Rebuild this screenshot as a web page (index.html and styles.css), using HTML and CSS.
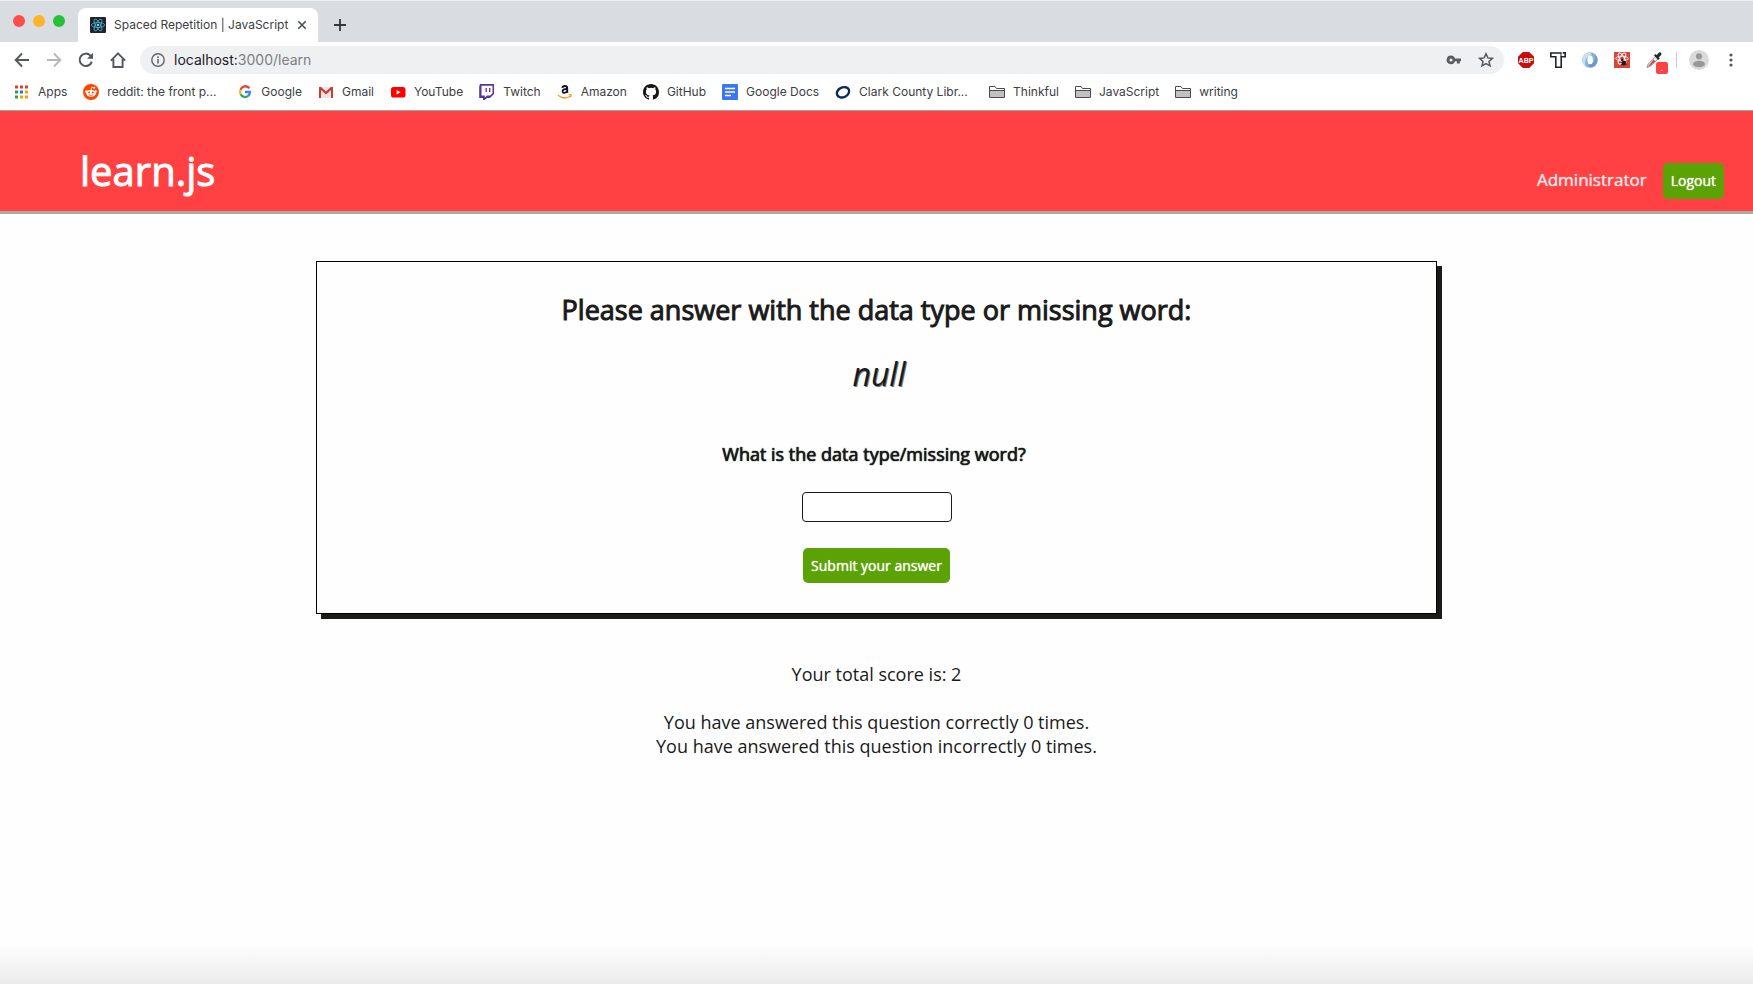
FILE: index.html
```html
<!DOCTYPE html>
<html lang="en">
<head>
<meta charset="utf-8">
<title>Spaced Repetition | JavaScript</title>
<link rel="stylesheet" href="styles.css">
</head>
<body>
<div class="browser">
  <div class="tab-strip">
    <div class="lights"><span class="light red"></span><span class="light amber"></span><span class="light green"></span></div>
    <div class="tab">
      <svg class="icon" viewBox="0 0 16 16"><rect width="16" height="16" rx="1" fill="#20232a"/><g fill="none" stroke="#4fb3d0" stroke-width=".8"><ellipse cx="8" cy="8" rx="6.6" ry="2.5"/><ellipse cx="8" cy="8" rx="6.6" ry="2.5" transform="rotate(60 8 8)"/><ellipse cx="8" cy="8" rx="6.6" ry="2.5" transform="rotate(120 8 8)"/></g><circle cx="8" cy="8" r="1.3" fill="#61dafb"/></svg>
      <span class="tab-title">Spaced Repetition | JavaScript</span>
      <button class="icon-btn" aria-label="Close tab"><svg width="10" height="10" viewBox="0 0 10 10"><path d="M1.3 1.3l7.4 7.4M8.7 1.3L1.3 8.7" stroke="#4b4f54" stroke-width="1.6"/></svg></button>
    </div>
    <button class="icon-btn new-tab" aria-label="New tab"><svg width="12" height="12" viewBox="0 0 12 12"><path d="M6 0v12M0 6h12" stroke="#33363a" stroke-width="1.8"/></svg></button>
  </div>

  <div class="toolbar">
    <div class="nav">
      <button class="icon-btn" aria-label="Back"><svg class="icon" viewBox="0 0 16 16"><path d="M15 8H2M8 1.5L1.7 8 8 14.5" fill="none" stroke="#54575b" stroke-width="1.9"/></svg></button>
      <button class="icon-btn" aria-label="Forward"><svg class="icon" viewBox="0 0 16 16"><path d="M1 8h13M8 1.5L14.3 8 8 14.5" fill="none" stroke="#b5b7b9" stroke-width="1.9"/></svg></button>
      <button class="icon-btn" aria-label="Reload"><svg class="icon" viewBox="0 0 16 16"><path d="M13.8 9.6A6.2 6.2 0 1 1 12.4 3.6L14 5.2" fill="none" stroke="#54575b" stroke-width="2"/><path d="M15 .8v6H9z" fill="#54575b"/></svg></button>
      <button class="icon-btn" aria-label="Home"><svg class="icon" viewBox="0 0 16 16"><path d="M.9 8.6L8 1.4l7.1 7.2M3.4 7v8h9.2V7" fill="none" stroke="#54575b" stroke-width="1.9"/></svg></button>
    </div>
    <div class="omnibox">
      <svg class="icon-sm" viewBox="0 0 14 14"><circle cx="7" cy="7" r="6.2" fill="none" stroke="#5f6368" stroke-width="1.4"/><path d="M7 6v4.4M7 3.3v1.6" stroke="#5f6368" stroke-width="1.5"/></svg>
      <span class="url">localhost:<span class="muted">3000/learn</span></span>
      <button class="icon-btn" aria-label="Saved passwords"><svg class="icon" viewBox="0 0 16 16"><path fill="#5a5d61" fill-rule="evenodd" d="M5 3.6a4.3 4.3 0 0 1 4 2.9h6v2.7h-1.2v2.3h-2.9V9.2H9A4.3 4.3 0 1 1 5 3.6zm0 2.8a1.5 1.5 0 1 0 0 3 1.5 1.5 0 0 0 0-3z"/></svg></button>
      <button class="icon-btn" aria-label="Bookmark"><svg class="icon" viewBox="0 0 16 16"><path d="M8 1.8l1.9 4.1 4.5.5-3.4 3 1 4.4L8 11.5l-4 2.3 1-4.4-3.4-3 4.5-.5z" fill="none" stroke="#54575b" stroke-width="1.5"/></svg></button>
    </div>
    <div class="extensions">
      <svg class="icon" viewBox="0 0 16 16" role="img"><path d="M4.8 0h6.4L16 4.8v6.4L11.2 16H4.8L0 11.2V4.8z" fill="#c70d0d"/><text x="8" y="10.5" text-anchor="middle" class="abp">ABP</text></svg>
      <svg class="icon" viewBox="0 0 16 16"><path d="M.8 1h10.400M.8 .3v4.400h5v10.500h5.400V4.700h4V.9h-2.500M4 4.700h2" fill="none" stroke="#1e2530" stroke-width="1.600"/><path d="M11 .3v4.400" stroke="#1e2530"/></svg>
      <svg class="icon" viewBox="0 0 16 16"><circle cx="8" cy="8" r="7.8" fill="#8bb2dc"/><path d="M8 .4A7.6 7.6 0 0 0 4 14.6C1.800 9.500 4 4 10 3.300z" fill="#c9def2"/><path d="M8 15.600a7.600 7.600 0 0 0 5-13C14.500 8 12 12 6 12.800z" fill="#6b97c9"/><ellipse cx="8.200" cy="8" rx="2.800" ry="4.200" fill="#fff"/></svg>
      <svg class="icon" viewBox="0 0 16 16"><rect width="16" height="16" fill="#d9453a"/><g fill="none" stroke="#fff" stroke-width="1"><ellipse cx="8" cy="6.500" rx="6.200" ry="2.300"/><ellipse cx="8" cy="6.500" rx="6.200" ry="2.300" transform="rotate(60 8 6.500)"/><ellipse cx="8" cy="6.500" rx="6.200" ry="2.300" transform="rotate(120 8 6.500)"/></g><ellipse cx="9.800" cy="11" rx="2.200" ry="2.600" fill="#191919"/><circle cx="8.200" cy="8" r="1.200" fill="#191919"/><path d="M6.500 10l6.500 2.500M12.500 9l-5.500 4" stroke="#191919" stroke-width=".8"/></svg>
      <span class="picker">
        <svg class="icon" viewBox="0 0 16 16"><path d="M9.500 4.500l2.500 2.500-7.500 7L1 15.500 2.300 12z" fill="#eee" stroke="#777" stroke-width=".8"/><path d="M7.500 7.500l1.800 1.800L4 14H2.500z" fill="#d8453e"/><path d="M8 3.500L9.500 2l1.300 1L13 .6c1.500-.9 3.200 1 2.200 2.400l-2.400 2.200 1 1.300L12.300 8z" fill="#292929"/></svg>
        <span class="badge">.</span>
      </span>
    </div>
    <span class="divider"></span>
    <button class="icon-btn" aria-label="Profile"><svg width="20" height="20" viewBox="0 0 20 20"><circle cx="10" cy="10" r="10" fill="#dadada"/><circle cx="10" cy="6.300" r="3.100" fill="#989898"/><ellipse cx="10" cy="14" rx="6" ry="3.200" fill="#989898"/></svg></button>
    <button class="icon-btn menu" aria-label="Menu"><svg width="4" height="14" viewBox="0 0 4 14"><g fill="#54575b"><circle cx="2" cy="2" r="1.600"/><circle cx="2" cy="7" r="1.600"/><circle cx="2" cy="12" r="1.600"/></g></svg></button>
  </div>

  <nav class="bookmarks" aria-label="Bookmarks">
    <a href="#"><svg class="icon" viewBox="0 0 16 16"><path d="M1 1.500h3v3H1zM6 1.500h3v3H6zM11 1.500h3v3h-3z" fill="#e8372c"/><path d="M1 6.500h3v3H1z" fill="#2f9e4f"/><path d="M6 6.500h3v3H6z" fill="#1a73e8"/><path d="M11 6.500h3v3h-3zM11 11.500h3v3h-3z" fill="#f5a300"/><path d="M1 11.500h3v3H1z" fill="#2f9e4f"/><path d="M6 11.500h3v3H6z" fill="#f5a300"/></svg><span>Apps</span></a>
    <a href="#"><svg class="icon" viewBox="0 0 16 16"><circle cx="8" cy="8" r="8" fill="#ff4500"/><ellipse cx="8" cy="9.300" rx="4.700" ry="3.400" fill="#fff"/><circle cx="3.400" cy="7.600" r="1.300" fill="#fff"/><circle cx="12.600" cy="7.600" r="1.300" fill="#fff"/><path d="M8 6.200l.7-3 2.300.6" fill="none" stroke="#fff" stroke-width=".8"/><circle cx="11.300" cy="3.800" r="1" fill="#fff"/><circle cx="6.200" cy="8.500" r="1" fill="#ff4500"/><circle cx="9.800" cy="8.500" r="1" fill="#ff4500"/><path d="M6 10.800q2 1.300 4 0" fill="none" stroke="#ff4500" stroke-width=".8"/></svg><span class="clipped">reddit: the front p...</span></a>
    <a href="#"><svg class="icon" viewBox="0 0 16 16"><g fill="none" stroke-width="2.300"><path d="M12.400 4.300A5 5 0 0 0 3.600 5.800" stroke="#ea4335"/><path d="M3.600 5.700a5 5 0 0 0 0 4.600" stroke="#fbbc05"/><path d="M3.600 10.200a5 5 0 0 0 7.600 1.600" stroke="#34a853"/><path d="M11 12a5 5 0 0 0 2-4H8" stroke="#4285f4"/></g></svg><span>Google</span></a>
    <a href="#"><svg class="icon" viewBox="0 0 16 16"><path d="M1 3h14v11H1z" fill="#e6e6e6"/><path d="M1 3h2l5 4.500L13 3h2v11h-2V6L8 10.500 3 6v8H1z" fill="#d3392f"/></svg><span>Gmail</span></a>
    <a href="#"><svg class="icon" viewBox="0 0 16 16"><rect x="1" y="3" width="14.500" height="10.500" rx="2.600" fill="#f00"/><path d="M6.600 6v4.600l4-2.300z" fill="#fff"/></svg><span>YouTube</span></a>
    <a href="#"><svg class="icon" viewBox="0 0 16 16"><path d="M1 0H15v10l-4 4H8l-2.200 2H4v-2H.2V2.600z" fill="#593695"/><path d="M2.500 1.700h11v7.500L11.200 11.500H8l-2.200 2v-2H2.500z" fill="#fff"/><path d="M7.200 4v4M10.700 4v4" stroke="#593695" stroke-width="1.300"/></svg><span>Twitch</span></a>
    <a href="#"><svg class="icon" viewBox="0 0 16 16"><path d="M5.400 3.800C5.600 2.400 6.700 2 7.900 2c1.500 0 2.300.8 2.300 2.100v3.500c0 .5.300.8.600 1.200" fill="none" stroke="#111" stroke-width="1.900"/><path d="M9.900 5C7.100 5 5.500 5.700 5.600 7.400c.2 2.100 3.300 1.800 4.300-.4" fill="none" stroke="#111" stroke-width="1.800"/><path d="M1 11.200c4 3.300 9 3.200 12.600.8M11.500 10.800c1.300-.3 2.500-.4 2.800 0 .3.500-.2 1.600-.7 2.400" fill="none" stroke="#f79a1c" stroke-width="1.300"/></svg><span>Amazon</span></a>
    <a href="#"><svg class="icon" viewBox="0 0 16 16"><path fill="#161614" d="M8 0C3.580 0 0 3.580 0 8c0 3.540 2.290 6.530 5.470 7.590.4.070.55-.17.55-.38 0-.19-.010-.82-.010-1.490-2.010.37-2.530-.49-2.690-.94-.090-.23-.48-.94-.82-1.130-.28-.15-.68-.52-.010-.53.63-.010 1.080.58 1.230.82.72 1.210 1.870.87 2.330.66.070-.52.28-.87.510-1.070-1.780-.2-3.640-.89-3.640-3.950 0-.87.310-1.590.82-2.150-.080-.2-.36-1.020.080-2.120 0 0 .67-.21 2.200.82a7.600 7.600 0 0 1 4 0c1.530-1.040 2.200-.82 2.200-.82.44 1.100.16 1.920.080 2.120.51.56.82 1.270.82 2.150 0 3.070-1.870 3.750-3.650 3.950.29.25.54.73.54 1.480 0 1.070-.010 1.930-.010 2.200 0 .21.150.46.55.38A8 8 0 0 0 16 8c0-4.420-3.580-8-8-8z"/></svg><span>GitHub</span></a>
    <a href="#"><svg class="icon" viewBox="0 0 16 16"><rect width="16" height="16" rx="1" fill="#3b78f0"/><path d="M3 4.500h10M3 8h10M3 11.500h6" stroke="#fff" stroke-width="1.700"/></svg><span>Google Docs</span></a>
    <a href="#"><svg class="icon" viewBox="0 0 16 16"><ellipse cx="8" cy="8.300" rx="6.400" ry="4.900" transform="rotate(-25 8 8.300)" fill="none" stroke="#0b2a5b" stroke-width="2.400"/></svg><span class="clipped">Clark County Libr...</span></a>
    <a href="#"><svg class="icon" viewBox="0 0 16 16"><path d="M.5 13.500v-11H6l1.500 2h8v9z" fill="#fff" stroke="#4b4b4b"/><path d="M1 6.500h14V13H1z" fill="#c1c1c4"/><path d="M.5 6.500h15" stroke="#4b4b4b"/></svg><span>Thinkful</span></a>
    <a href="#"><svg class="icon" viewBox="0 0 16 16"><path d="M.5 13.500v-11H6l1.500 2h8v9z" fill="#fff" stroke="#4b4b4b"/><path d="M1 6.500h14V13H1z" fill="#c1c1c4"/><path d="M.5 6.500h15" stroke="#4b4b4b"/></svg><span>JavaScript</span></a>
    <a href="#"><svg class="icon" viewBox="0 0 16 16"><path d="M.5 13.500v-11H6l1.500 2h8v9z" fill="#fff" stroke="#4b4b4b"/><path d="M1 6.500h14V13H1z" fill="#c1c1c4"/><path d="M.5 6.500h15" stroke="#4b4b4b"/></svg><span>writing</span></a>
  </nav>
</div>

<header class="site-header">
  <h1><a href="#">learn.js</a></h1>
  <div class="account"><span class="user">Administrator</span><button class="btn">Logout</button></div>
</header>

<main>
  <section class="card">
    <h2>Please answer with the data type or missing word:</h2>
    <p class="word">null</p>
    <form class="answer">
      <label for="guess">What is the data type/missing word?</label>
      <input id="guess" type="text">
      <button class="btn" type="button">Submit your answer</button>
    </form>
  </section>
  <div class="stats">
    <p>Your total score is: 2</p>
    <p>You have answered this question correctly 0 times.<br>You have answered this question incorrectly 0 times.</p>
  </div>
</main>
</body>
</html>
```
FILE: styles.css
```css
* { box-sizing: border-box; }

body {
  margin: 0;
  min-height: 100vh;
  color: #1a1a1a;
  font: 18px/24px "Open Sans", sans-serif;
  background: #fefefe linear-gradient(to top, #ebebeb, #fefefe) bottom / 100% 40px no-repeat;
}

button { font: inherit; cursor: pointer; }
a { color: inherit; text-decoration: none; }
svg { display: block; flex: none; overflow: visible; }

.icon { width: 16px; height: 16px; }
.icon-sm { width: 14px; height: 14px; }
.icon-btn { display: flex; padding: 0; border: 0; background: none; }

/* Browser chrome */
.browser {
  background: #fff;
  border-bottom: 1px solid #a3a3a3;
  color: #3c4043;
  font: 12px/16px Inter, sans-serif;
}

.tab-strip {
  display: flex;
  height: 42px;
  padding-left: 13px;
  background: #d9dce1;
  border-top: 1px solid #eceef0;
}
.lights { display: flex; gap: 8px; padding-top: 14px; margin-right: 13px; }
.light { width: 12px; height: 12px; border-radius: 50%; }
.red { background: #fc4f4b; }
.amber { background: #fdb32a; }
.green { background: #26c138; }

.tab {
  display: flex;
  align-items: center;
  width: 240px;
  margin-top: 7px;
  padding: 0 11px 0 12px;
  border-radius: 8px 8px 0 0;
  background: #fff;
}
.tab-title { flex: 1; margin-left: 8px; white-space: nowrap; }
.new-tab { align-self: center; margin: 7px 0 0 16px; }

.toolbar { display: flex; align-items: center; height: 36px; padding: 0 20px 0 14px; }
.nav { display: flex; gap: 16px; margin-right: 14px; }
.omnibox {
  display: flex;
  flex: 1;
  align-items: center;
  gap: 16px;
  height: 28px;
  padding: 0 10px 0 11px;
  border-radius: 14px;
  background: #eff0f2;
}
.url { flex: 1; margin-left: -7px; color: #202124; font-size: 14px; }
.muted { color: #7b7f84; }
.extensions { display: flex; gap: 16px; margin-left: 14px; }
.abp { fill: #fff; font: bold 7px "Liberation Sans", sans-serif; }
.picker { position: relative; }
.badge {
  position: absolute;
  left: 10px;
  top: 10px;
  width: 12px;
  height: 12px;
  border-radius: 2px;
  background: #ff4143;
  color: #fff;
  font-size: 10px;
  line-height: 10px;
  text-align: center;
}
.divider { width: 1px; height: 16px; margin: 0 12px 0 14px; background: #ccc; }
.menu { margin-left: 20px; }

.bookmarks { display: flex; gap: 16px; height: 32px; padding: 0 14px 4px; align-items: center; }
.bookmarks a { display: flex; align-items: center; gap: 8px; white-space: nowrap; }
.clipped { min-width: 114px; }

/* Page */
.site-header {
  display: flex;
  justify-content: space-between;
  align-items: flex-end;
  height: 103px;
  padding: 0 29px 12px 80px;
  border-bottom: 3px solid #a9a9a9;
  background: #ff4143;
  color: #fff;
}
h1 { margin: 0; font-size: 40px; line-height: 56px; font-weight: 400; -webkit-text-stroke: 1px; }
.account { display: flex; align-items: center; gap: 16px; }
.user {
  padding-bottom: 2px;
  color: #f0e6e6;
  font-size: 17px;
  text-shadow: 0 0 1px currentColor;
}

.btn {
  height: 35px;
  padding: 0 8px;
  border: 0;
  border-radius: 5px;
  background: #5ba304;
  color: #fff;
  font-size: 14px;
  text-shadow: 0 0 1px currentColor;
}
.account .btn { height: 36px; }

main { padding: 47px 0; text-align: center; }
.card {
  width: 64%;
  margin: 0 auto;
  padding: 30px 16px;
  border: 1px solid #000;
  background: #fefefe;
  box-shadow: 5px 5px #1b1b17;
}
h2 { margin: 0; font-size: 27px; line-height: 36px; font-weight: 400; -webkit-text-stroke: 1px; }
.word {
  margin: 26px 0 48px;
  padding-left: 5px;
  font-size: 32px;
  line-height: 40px;
  font-style: italic;
  text-shadow: 1px 1px #777;
}
.answer { display: flex; flex-direction: column; align-items: center; }
.answer label { padding-right: 5px; text-shadow: 0 0 1px currentColor, 0 0 1px currentColor; }
.answer input {
  width: 150px;
  height: 30px;
  margin: 26px 0;
  padding: 0 8px;
  border: 1px solid #1a1a1a;
  border-radius: 4px;
  background: #fff;
  font: inherit;
}
.stats { padding-top: 48px; }
.stats p { margin: 0 0 24px; }
```
